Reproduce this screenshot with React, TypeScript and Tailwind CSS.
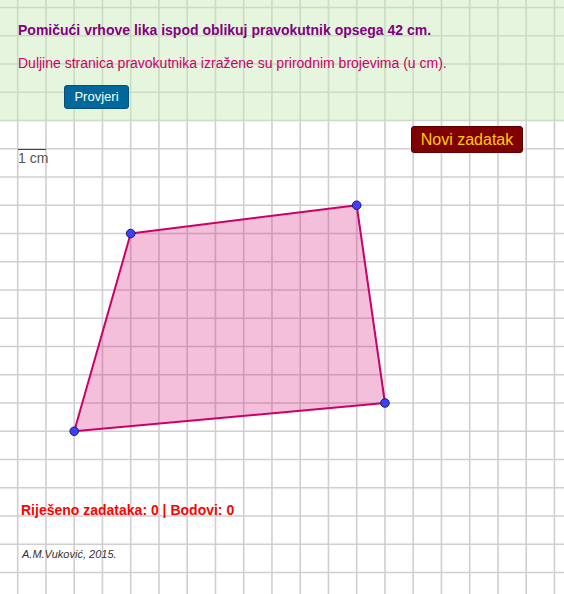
import React from 'react';

const STEP = 28.25;
const X0 = 17.7;
const Y0 = 7.5;

const gx = (k: number) => X0 + k * STEP;
const gy = (k: number) => Y0 + k * STEP;

// vrhovi lika (u koordinatama mreže)
const vertices: [number, number][] = [
  [4, 8],
  [12, 7],
  [13, 14],
  [2, 15],
];

const Canvas: React.FC = () => {
  const cols = Array.from({ length: 21 }, (_, i) => i);
  const rows = Array.from({ length: 22 }, (_, i) => i);
  const pts = vertices.map(([i, j]) => `${gx(i)},${gy(j)}`).join(' ');
  return (
    <svg className="absolute inset-0" width={564} height={594} viewBox="0 0 564 594">
      {cols.map((k) => (
        <line key={'v' + k} x1={gx(k)} y1={0} x2={gx(k)} y2={594} stroke="#cfcfcf" strokeWidth={1.6} />
      ))}
      {rows.map((k) => (
        <line key={'h' + k} x1={0} y1={gy(k)} x2={564} y2={gy(k)} stroke="#cfcfcf" strokeWidth={1.6} />
      ))}
      <polygon points={pts} fill="rgba(210,0,110,0.25)" stroke="#cc0066" strokeWidth={2} strokeLinejoin="round" />
      {vertices.map(([i, j], n) => (
        <circle key={n} cx={gx(i)} cy={gy(j)} r={4.3} fill="#3f3fff" stroke="#1a1a66" strokeWidth={1} />
      ))}
    </svg>
  );
};

export default function App() {
  return (
    <div className="relative w-[564px] h-[594px] overflow-hidden bg-white font-['Liberation_Sans',Arial,sans-serif]">
      <Canvas />

      <div className="relative h-[121px] bg-[rgba(200,233,182,0.45)] pl-[18px] pt-[22px]">
        <p className="text-[14px] leading-4 font-bold text-[#800080]">
          Pomičući vrhove lika ispod oblikuj pravokutnik opsega 42 cm.
        </p>
        <p className="mt-[17px] text-[14px] leading-4 text-[#cc0066]">
          Duljine stranica pravokutnika izražene su prirodnim brojevima (u cm).
        </p>
        <button className="mt-[14px] ml-[46px] h-6 w-[65px] rounded-[3px] border border-[#0a4f75] bg-[#00689a] text-[13px] text-white">
          Provjeri
        </button>
      </div>

      <div className="relative flex items-start justify-between pl-[18px] pr-[41px] pt-[5px]">
        <div className="mt-[23px] flex flex-col">
          <div className="w-[28px] border-t border-[#444]" />
          <span className="text-[14px] leading-4 text-[#555] whitespace-nowrap">1 cm</span>
        </div>
        <button className="h-[27px] w-[112px] rounded-[3px] border border-[#5a0000] bg-[#800000] text-[16px] text-[#ffcc00]">
          Novi zadatak
        </button>
      </div>

      <p className="relative mt-[336px] pl-[21px] text-[14px] leading-4 font-bold text-[#ff0000]">
        Riješeno zadataka: 0 | Bodovi: 0
      </p>
      <p className="relative mt-[28px] pl-[22px] text-[11px] leading-4 italic text-[#333]">
        A.M.Vuković, 2015.
      </p>
    </div>
  );
}
